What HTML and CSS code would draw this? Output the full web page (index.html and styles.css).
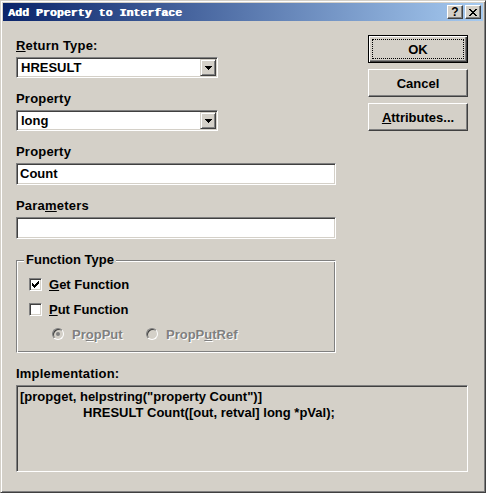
FILE: index.html
```html
<!DOCTYPE html>
<html lang="en">
<head>
    <meta charset="UTF-8">
    <title>Add Property to Interface</title>
    <link rel="stylesheet" href="styles.css">
</head>
<body>
<div class="window">
    <div class="titlebar">
        <span class="title">Add Property to Interface</span>
        <div class="tbtns">
            <span class="tbtn help">?</span>
            <span class="tbtn">
                <svg width="8" height="7" viewBox="0 0 8 7"><path d="M0 0h2v1H0zM6 0h2v1H6zM1 1h2v1H1zM5 1h2v1H5zM2 2h4v1H2zM3 3h2v1H3zM2 4h4v1H2zM1 5h2v1H1zM5 5h2v1H5zM0 6h2v1H0zM6 6h2v1H6z" fill="#000"/></svg>
            </span>
        </div>
    </div>
    <div class="content">
        <div class="top">
            <div class="left">
                <div class="label"><u>R</u>eturn Type:</div>
                <div class="combo">
                    <span class="value">HRESULT</span>
                    <span class="drop"><svg width="7" height="4" viewBox="0 0 7 4"><path d="M0 0h7v1H0zM1 1h5v1H1zM2 2h3v1H2zM3 3h1v1H3z" fill="#000"/></svg></span>
                </div>
                <div class="label">Property</div>
                <div class="combo">
                    <span class="value">long</span>
                    <span class="drop"><svg width="7" height="4" viewBox="0 0 7 4"><path d="M0 0h7v1H0zM1 1h5v1H1zM2 2h3v1H2zM3 3h1v1H3z" fill="#000"/></svg></span>
                </div>
                <div class="label">Property</div>
                <div class="edit">Count</div>
                <div class="label">Para<u>m</u>eters</div>
                <div class="edit"></div>

                <div class="group">
                    <span class="legend">Function Type</span>
                    <div class="row">
                        <span class="cb"><svg width="7" height="7" viewBox="0 0 7 7"><path d="M6 0h1v3H6zM5 1h1v3H5zM4 2h1v3H4zM3 3h1v3H3zM2 4h1v3H2zM1 3h1v3H1zM0 2h1v3H0z" fill="#000"/></svg></span>
                        <span><u>G</u>et Function</span>
                    </div>
                    <div class="row">
                        <span class="cb"></span>
                        <span><u>P</u>ut Function</span>
                    </div>
                    <div class="row radios">
                        <span class="opt first"><span class="radio on"></span><span class="dis">Pr<u>o</u>pPut</span></span>
                        <span class="opt"><span class="radio"></span><span class="dis">PropP<u>u</u>tRef</span></span>
                    </div>
                </div>
            </div>
            <div class="buttons">
                <div class="btn default">OK</div>
                <div class="btn">Cancel</div>
                <div class="btn"><span><u>A</u>ttributes...</span></div>
            </div>
        </div>
        <div class="label impl-label">Implementation:</div>
        <div class="impl">[propget, helpstring("property Count")]
	HRESULT Count([out, retval] long *pVal);</div>
    </div>
</div>
</body>
</html>
```

FILE: styles.css
```css
*{
    margin: 0;
    padding: 0;
    box-sizing: border-box;
}
body{
    font-family: "Liberation Sans", Arial, sans-serif;
    font-size: 13px;
    font-weight: bold;
    color: #000000;
    background-color: #d4d0c8;
}
.window{
    width: 486px;
    height: 493px;
    background-color: #d4d0c8;
    border: 1px solid;
    border-color: #d4d0c8 #404040 #404040 #d4d0c8;
    box-shadow: inset 1px 1px #ffffff, inset -1px -1px #808080;
    padding: 2px;
    display: flex;
    flex-direction: column;
}
.titlebar{
    height: 18px;
    background: linear-gradient(to right, #0a246a, #a6caf0);
    display: flex;
    align-items: center;
    padding: 0 2px 0 5px;
}
.title{
    flex: 1;
    font-family: "Liberation Mono", "Courier New", monospace;
    font-size: 11.6px;
    font-weight: bold;
    color: #ffffff;
    text-shadow: 0.6px 0 #ffffff;
    white-space: nowrap;
}
.tbtns{
    display: flex;
    gap: 2px;
}
.tbtn{
    width: 16px;
    height: 14px;
    background-color: #d4d0c8;
    border: 1px solid;
    border-color: #ffffff #404040 #404040 #ffffff;
    box-shadow: inset -1px -1px #808080;
    display: flex;
    align-items: center;
    justify-content: center;
}
.tbtn.help{
    font-size: 12px;
    line-height: 12px;
}
.content{
    flex: 1;
    padding: 14px 15px 0 13px;
}
.top{
    display: flex;
    justify-content: space-between;
}
.left{
    width: 320px;
    padding-top: 3px;
}
.label{
    height: 16px;
    line-height: 16px;
    margin-bottom: 3px;
    white-space: nowrap;
    letter-spacing: 0.2px;
}
.combo, .edit, .impl{
    background-color: #ffffff;
    border: 1px solid;
    border-color: #808080 #ffffff #ffffff #808080;
    box-shadow: inset 1px 1px #404040, inset -1px -1px #d4d0c8;
}
.combo{
    width: 202px;
    height: 21px;
    padding: 1px;
    display: flex;
    align-items: center;
    margin-bottom: 13px;
}
.combo .value{
    flex: 1;
    padding-left: 3px;
}
.drop{
    width: 16px;
    height: 17px;
    background-color: #d4d0c8;
    border: 1px solid;
    border-color: #d4d0c8 #404040 #404040 #d4d0c8;
    box-shadow: inset 1px 1px #ffffff, inset -1px -1px #808080;
    display: flex;
    align-items: center;
    justify-content: center;
}
.drop svg{
    display: block;
}
.edit{
    width: 320px;
    height: 22px;
    line-height: 20px;
    padding: 0 3px;
    margin-bottom: 13px;
}
.group{
    position: relative;
    width: 320px;
    margin-top: 21px;
    border: 1px solid;
    border-color: #808080 #ffffff #ffffff #808080;
    box-shadow: inset 1px 1px #ffffff, inset -1px -1px #808080;
    padding: 15px 12px 10px;
}
.legend{
    position: absolute;
    top: -9px;
    left: 7px;
    padding: 0 2px;
    line-height: 16px;
    background-color: #d4d0c8;
}
.row{
    display: flex;
    align-items: center;
    height: 16px;
    margin-bottom: 9px;
}
.row:last-child{
    margin-bottom: 0;
}
.cb{
    width: 13px;
    height: 13px;
    margin-right: 7px;
    background-color: #ffffff;
    border: 1px solid;
    border-color: #808080 #ffffff #ffffff #808080;
    box-shadow: inset 1px 1px #404040, inset -1px -1px #d4d0c8;
    display: flex;
    align-items: center;
    justify-content: center;
}
.cb svg{
    display: block;
}
.radios{
    padding-left: 23px;
}
.opt{
    display: flex;
    align-items: center;
}
.opt.first{
    width: 94px;
}
.radio{
    width: 12px;
    height: 12px;
    margin-right: 8px;
    border-radius: 50%;
    border: 1px solid;
    border-color: #808080 #ffffff #ffffff #808080;
    box-shadow: inset 1px 1px #404040, inset -1px -1px #d4d0c8;
    background-color: #d4d0c8;
    display: flex;
    align-items: center;
    justify-content: center;
}
.radio.on::after{
    content: "";
    width: 4px;
    height: 4px;
    border-radius: 50%;
    background-color: #808080;
}
.dis{
    color: #808080;
    text-shadow: 1px 1px 0 #ffffff;
}
.buttons{
    width: 100px;
    display: flex;
    flex-direction: column;
    gap: 6px;
}
.btn{
    position: relative;
    height: 28px;
    background-color: #d4d0c8;
    border: 1px solid;
    border-color: #ffffff #404040 #404040 #ffffff;
    box-shadow: inset -1px -1px #808080;
    display: flex;
    align-items: center;
    justify-content: center;
}
.btn.default{
    border-color: #000000;
    box-shadow: inset 1px 1px #ffffff, inset -1px -1px #404040, inset -2px -2px #808080;
}
.btn.default::after{
    content: "";
    position: absolute;
    top: 3px;
    left: 3px;
    right: 3px;
    bottom: 3px;
    border: 1px dotted #000000;
}
.impl-label{
    margin-top: 13px;
}
.impl{
    height: 87px;
    background-color: #d4d0c8;
    padding: 3px 3px;
    line-height: 16px;
    white-space: pre;
    tab-size: 63px;
}
```
